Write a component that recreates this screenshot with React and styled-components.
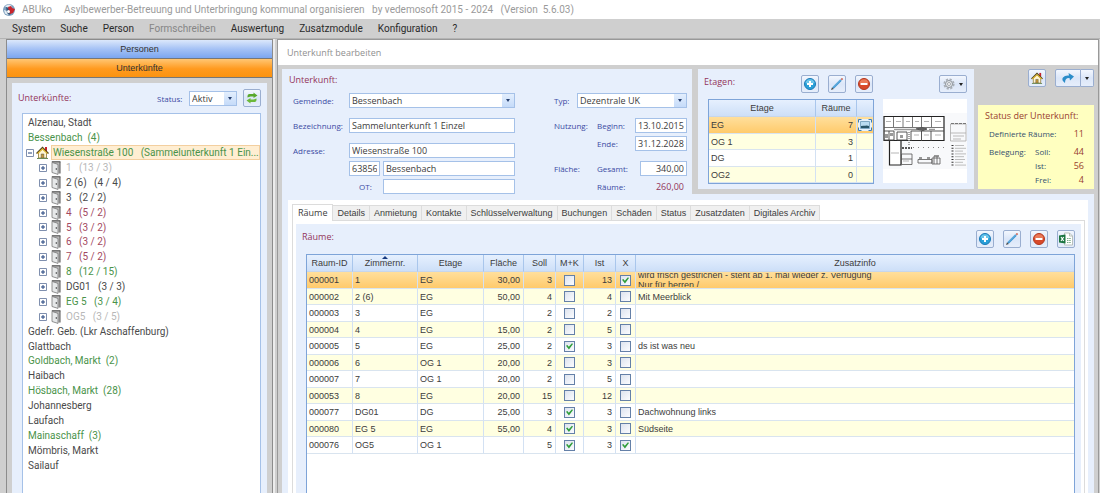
import React, {useState} from 'react';
import styled, {createGlobalStyle, css} from 'styled-components';

const ui = '"Open Sans", "Noto Sans", sans-serif';
const wide = 'Roboto, "Open Sans", sans-serif';
const grid = '"Liberation Sans", Arial, sans-serif';

const GlobalStyle = createGlobalStyle`
  * { box-sizing: border-box; }
  body { margin: 0; background: #cfcfcf; }
  button, input, select { font: inherit; color: inherit; margin: 0; padding: 0; }
  ul { list-style: none; margin: 0; padding: 0; }
  h1, h2, h3 { margin: 0; font-weight: normal; }
`;

const Window = styled.div`
  display: flex;
  flex-direction: column;
  height: 100vh;
  overflow: hidden;
  background: #cfcfcf;
  color: #3c3c3c;
  font: 9px/14px ${ui};
`;

const TitleBar = styled.header`
  display: flex;
  align-items: center;
  height: 19px;
  padding-left: 2px;
  background: #fff;
  color: #9a9a9a;
  font-family: ${wide};
  font-size: 10px;
  white-space: pre;
`;

const AppName = styled.span`
  width: 42px;
  margin-left: 6px;
`;

const Title = styled.h1`
  font-size: 10px;
`;

const MenuBar = styled.nav`
  display: flex;
  gap: 15px;
  height: 20px;
  padding-left: 12px;
  border-bottom: 1px solid #b4b4b4;
  font-family: ${wide};
  font-size: 10px;
`;

const MenuItem = styled.button`
  border: 0;
  background: none;
  color: #2a2a2a;

  &:disabled {
    color: #868686;
  }
`;

const Workspace = styled.div`
  display: flex;
  flex: 1;
  min-height: 0;
`;

const Sidebar = styled.aside`
  display: flex;
  flex-direction: column;
  width: 267px;
  margin-left: 6px;
  border: 1px solid #8c8c8c;
  border-bottom: 0;
`;

const Splitter = styled.div`
  width: 4px;
  border-left: 2px solid #ececec;
`;

const NavButton = styled.button`
  height: 19px;
  border: 0;
  border-bottom: 1px solid #777;
  background: ${p => (p.$active ? 'linear-gradient(#ffc673, #ff9a1e 55%, #fb9310)' : 'linear-gradient(#dce8fb, #a5c2f5 50%, #7ba6f0)')};
  color: #333;
  font-family: ${grid};
`;

const SidePanel = styled.section`
  display: flex;
  flex-direction: column;
  flex: 1;
  min-height: 0;
  margin: 5px 5px 0;
  padding: 0 6px;
  background: #e7effc;
`;

const SideHead = styled.div`
  display: flex;
  align-items: center;
  height: 30px;
`;

const StatusFilter = styled.div`
  display: flex;
  margin: 0 6px 0 auto;
`;

const Heading = styled.h2`
  color: #93355a;
  font-size: 9px;
  line-height: 14px;
`;

const Label = styled.label`
  color: #3b4aa3;
  font-size: 8px;
  line-height: 15px;
`;

const SelectBox = styled.span`
  display: flex;
  width: ${p => (p.$width ? `${p.$width}px` : '100%')};
  height: 15px;
  border: 1px solid #a5c1e8;
  background: #fff;
`;

const NativeSelect = styled.select`
  flex: 1;
  min-width: 0;
  padding-left: 2px;
  border: 0;
  outline: 0;
  background: none;
  appearance: none;
  line-height: 13px;
`;

const Arrow = styled.span`
  display: grid;
  place-items: center;
  width: 12px;
  background: linear-gradient(#e3eefd, #c5dbf9);

  &::after {
    content: '';
    border: 2px solid transparent;
    border-top: 3px solid #27406f;
    border-bottom: 0;
  }
`;

const TextInput = styled.input`
  width: ${p => (p.$width ? `${p.$width}px` : '100%')};
  height: 15px;
  min-width: 0;
  padding: 0 2px;
  border: 1px solid #a5c1e8;
  outline: 0;
  background: #fff;
  text-align: ${p => (p.$right ? 'right' : 'left')};
`;

const ToolButton = styled.button`
  display: flex;
  align-items: center;
  justify-content: center;
  gap: 4px;
  width: ${p => p.$width || 18}px;
  height: 18px;
  border: 1px solid #9aaed0;
  border-radius: 2px;
  background: linear-gradient(#f3f7fe, #dbe6f8 50%, #e6eefb);
`;

const Caret = styled.span`
  border: 2px solid transparent;
  border-top: 3px solid #222;
  border-bottom: 0;
`;

const Tree = styled.ul`
  flex: 1;
  min-height: 0;
  margin-left: 4px;
  padding-top: 1px;
  overflow: hidden;
  border: 1px solid #a5c1e8;
  border-bottom: 0;
  background: #fff;
  font-family: ${wide};
  font-size: 10px;
`;

const treeColors = {
  normal: '#4a4a4a',
  green: '#4a934a',
  red: '#a3495f',
  muted: '#b8b8b8',
};

const TreeItem = styled.li`
  display: flex;
  align-items: center;
  gap: ${p => (p.$level === 1 ? 2 : 4)}px;
  height: 15px;
  padding-left: ${p => [5, 3, 16][p.$level]}px;
  color: ${p => treeColors[p.$tone]};
  line-height: 15px;
  white-space: pre;

  &:nth-child(8n) {
    height: 14px;
  }
`;

const TreeText = styled.span`
  ${p => p.$selected && css`
    flex: 1;
    height: 15px;
    padding-left: 1px;
    border: 1px solid #f3cf9f;
    background: #ffeed2;
    line-height: 13px;
  `}
`;

const Expander = styled.button`
  display: grid;
  width: 8px;
  height: 8px;
  border: 0;
  background: none;
`;

const Main = styled.main`
  display: flex;
  flex-direction: column;
  flex: 1;
  min-width: 0;
  margin-right: 1px;
  border: 1px solid #999;
  border-bottom: 0;
`;

const MainHead = styled.h2`
  height: 25px;
  padding-left: 9px;
  background: #fff;
  color: #8f8f8f;
  font-size: 9px;
  line-height: 25px;
`;

const Content = styled.div`
  display: flex;
  flex-direction: column;
  flex: 1;
  min-height: 0;
  padding: 4px 4px 0;
`;

const TopRow = styled.div`
  display: flex;
  height: 125px;
`;

const FormPanel = styled.section`
  flex: 1;
  min-width: 0;
  margin-right: 6px;
  padding: 4px 5px 0 7px;
  background: #e7effc;
`;

const FormColumns = styled.div`
  display: flex;
  gap: 39px;
  padding: 6px 0 0 4px;
`;

const FormColumn = styled.div`
  flex: ${p => (p.$width ? `0 0 ${p.$width}px` : 1)};
  min-width: 0;
`;

const FormRow = styled.div`
  display: flex;
  align-items: center;
  height: 15px;
  margin-bottom: ${p => (p.$tight ? 3 : 10)}px;
`;

const FormLabel = styled(Label)`
  flex: 0 0 ${p => p.$width}px;
  padding-left: ${p => p.$indent || 0}px;
`;

const PostalCode = styled.span`
  flex: 0 0 34px;
  display: flex;
`;

const Filler = styled.span`
  flex: 1;
`;

const Output = styled.output`
  padding-right: 3px;
  color: #93355a;
`;

const FloorPanel = styled.section`
  width: 276px;
  margin-bottom: 5px;
  padding: 6px 7px 0 6px;
  background: #e7effc;
`;

const Toolbar = styled.div`
  display: flex;
  gap: 9px;
  height: 18px;
`;

const PushRight = styled.span`
  margin-left: auto;
`;

const FloorBody = styled.div`
  display: flex;
  gap: 9px;
  padding: 6px 0 0 4px;
`;

const PlanImage = styled.svg`
  width: 84px;
  height: 84px;
  background: #fff;
`;

const StatusColumn = styled.div`
  display: flex;
  flex-direction: column;
  justify-content: space-between;
  width: 116px;
  margin: 0 0 5px 4px;
`;

const StatusTools = styled.div`
  display: flex;
  justify-content: flex-end;
  gap: 9px;
`;

const SplitButton = styled.div`
  display: flex;

  button:first-child {
    border-radius: 2px 0 0 2px;
  }

  button:last-child {
    border-left: 0;
    border-radius: 0 2px 2px 0;
  }
`;

const StatusBox = styled.section`
  height: 84px;
  padding: 4px 10px 0 7px;
  background: #ffffc0;
`;

const StatusTitle = styled.h3`
  color: #99402f;
  font-size: 9px;
  line-height: 14px;
`;

const StatusList = styled.dl`
  display: grid;
  grid-template-columns: 46px 1fr auto;
  margin: 4px 0 0 4px;
  color: #35506e;
  font-size: 8px;
  line-height: 14px;

  dd {
    margin: 0;
    color: #99402f;
    font-size: 9px;
    text-align: right;
  }
`;

const StatusTerm = styled.dt`
  grid-column: ${p => p.$column || 'auto'};
  margin-bottom: ${p => (p.$spaced ? 4 : 0)}px;
`;

const DetailPanel = styled.section`
  display: flex;
  flex: 1;
  min-height: 0;
  padding: 6px 6px 0;
  background: #e7effc;
`;

const TabBox = styled.div`
  display: flex;
  flex-direction: column;
  flex: 1;
  min-width: 0;
  padding: 4px 3px 0 4px;
  background: #fff;
`;

const TabList = styled.div`
  display: flex;
  align-items: flex-end;
  height: 17px;
  border-bottom: 1px solid #dcdcdc;
  font-family: ${grid};
`;

const Tab = styled.button`
  height: ${p => (p.$active ? 17 : 15)}px;
  padding: 0 ${p => (p.$active ? 5 : 4)}px;
  margin-bottom: ${p => (p.$active ? -1 : 0)}px;
  border: 1px solid #dcdcdc;
  border-bottom: 0;
  border-left-width: ${p => (p.$active ? 1 : 0)}px;
  background: ${p => (p.$active ? '#fff' : '#f0f0f0')};
  font-family: ${p => (p.$active ? ui : 'inherit')};
  white-space: nowrap;
`;

const TabPage = styled.div`
  display: flex;
  flex-direction: column;
  flex: 1;
  min-height: 0;
  padding: 3px 3px 0;
  border: 1px solid #dcdcdc;
  border-width: 0 1px;
`;

const RoomPanel = styled.div`
  display: flex;
  flex-direction: column;
  flex: 1;
  min-height: 0;
  padding: 6px 6px 0;
  background: #e7effc;
`;

const TableFrame = styled.div`
  flex: 1;
  min-height: 0;
  margin: 6px 0 0 4px;
  overflow: hidden;
  border: 1px solid #7ea4d8;
  border-bottom: 0;
  background: #fff;
`;

const Table = styled.table`
  width: 100%;
  table-layout: fixed;
  border-collapse: separate;
  border-spacing: 0;
  font: 9px/14px ${grid};
`;

const FloorTable = styled(Table)`
  width: 166px;
  border: 1px solid #7ea4d8;
`;

const Th = styled.th`
  height: 17px;
  padding: 0;
  border-right: 1px solid #a9c6ec;
  border-bottom: 1px solid #c7d6ea;
  background: linear-gradient(#e6f0fe, #cddff8);
  font-weight: normal;
  text-align: center;

  &:last-child {
    border-right: 0;
  }
`;

const SortMark = styled.span`
  position: absolute;
  top: 0;
  left: 50%;
  margin-left: -3px;
  border: 3px solid transparent;
  border-top: 0;
  border-bottom: 3px solid #173a80;
`;

const HeadCell = styled.div`
  position: relative;
`;

const Row = styled.tr`
  height: 17px;
  background: #fff;

  &:nth-child(even) {
    height: 16px;
    background: #ffffe1;
  }

  ${p => p.$selected && css`
    background: linear-gradient(#ffdf9c, #ffc968);
  `}
`;

const Td = styled.td`
  padding: 0 3px 0 2px;
  border-right: 1px solid #d3e1f3;
  border-bottom: 1px solid #d9e4ef;
  line-height: 14px;
  text-align: ${p => p.$align || 'left'};
  white-space: nowrap;

  &:last-child {
    border-right: 0;
  }
`;

const CheckCell = styled(Td)`
  padding: 0;
  line-height: 0;
`;

const Check = styled.input`
  width: 11px;
  height: 11px;
  border: 1px solid #6480a8;
  background: linear-gradient(135deg, #dde3ee, #fbfcff);
  appearance: none;
  vertical-align: top;

  &:checked::after {
    content: '';
    display: block;
    width: 7px;
    height: 7px;
    margin: 1px;
    background: #2f9e3a;
    clip-path: polygon(0 45%, 20% 35%, 40% 60%, 85% 10%, 100% 20%, 42% 100%);
  }
`;

const Note = styled.div`
  display: flex;
  align-items: center;
  height: 14px;
  overflow: hidden;
  line-height: 10px;
  white-space: pre;
`;

const AppIcon = () => (
  <svg width="14" height="14" viewBox="0 0 14 14" aria-hidden="true">
    <circle cx="7" cy="7" r="6" fill="#7e9fbd" />
    <path d="M3 3 7 1.500 10 3 8 5 5 5zM2 7l3 1 1 4-3-1.500z" fill="#e4eef5" />
    <path d="M4 4l4 1 2 3-2 4-3-2z" fill="#34587c" />
    <path d="M6 4l3-1 1 2 3 1-2 4-3 1-1-3z" fill="#c9242b" />
    <circle cx="6.500" cy="8.500" r="1.500" fill="#fff" />
  </svg>
);

const House = ({size = 13}) => (
  <svg width={size} height={size} viewBox="0 0 13 13" aria-hidden="true">
    <path d="M9 1h2v4H9z" fill="#c8202a" />
    <path d="M2.500 6.500 6.500 3l4 3.500V12h-8z" fill="#fff6d2" stroke="#8a7434" strokeWidth=".8" />
    <path d="M.5 7.500 6.500 1.500l6 6" fill="none" stroke="#4d421c" strokeWidth="1.300" />
    <path d="M1.500 7.600 6.500 2.900l5 4.700" fill="none" stroke="#e1b62d" strokeWidth="1.200" />
    <path d="M5.200 8h2.600v4H5.200z" fill="#c79a35" stroke="#4a4a4a" strokeWidth=".5" />
    <path d="M1 12.500h11" stroke="#6b8a58" />
  </svg>
);

const Door = () => (
  <svg width="11" height="14" viewBox="0 0 11 14" aria-hidden="true">
    <path d="M1 .8h8v11.700H6" fill="#b9b9b9" />
    <path d="M.8.8h8.700" stroke="#444" />
    <path d="M9 1v11.500" stroke="#555" />
    <path d="M1 1.400l6 2v10L1 11.500z" fill="#e6e8e9" stroke="#777" strokeWidth=".8" />
    <circle cx="5.300" cy="8" r=".7" fill="#222" />
  </svg>
);

const ToggleIcon = ({open}) => (
  <svg width="8" height="8" viewBox="0 0 8 8" aria-hidden="true">
    <path d="M.5.5h7v7h-7z" fill="#fff" stroke="#7f8fae" />
    <path d={open ? 'M2 4h4' : 'M2 4h4M4 2v4'} stroke="#24447e" />
  </svg>
);

const Refresh = () => (
  <svg width="14" height="14" viewBox="0 0 14 14" aria-hidden="true">
    <path d="M2.500 6.500V5q0-2 2-2h4V1.500L12.500 4.500 8.500 7V5.500H5.500z" fill="#58a82c" />
    <path d="M11.500 7.500V9q0 2-2 2h-4v1.500L1.500 9.500 5.500 7v1.500h3z" fill="#6cb93a" />
  </svg>
);

const Plus = () => (
  <svg width="14" height="14" viewBox="0 0 14 14" aria-hidden="true">
    <circle cx="7" cy="7" r="5.500" fill="#29a0d8" stroke="#1b79b6" />
    <path d="M2.500 6a4.600 4.600 0 0 1 9 0q-4.500 2-9 0z" fill="#6cc5ea" />
    <path d="M7 4v6M4 7h6" stroke="#fff" strokeWidth="2" />
  </svg>
);

const Minus = () => (
  <svg width="14" height="14" viewBox="0 0 14 14" aria-hidden="true">
    <circle cx="7" cy="7" r="5.500" fill="#d8492a" stroke="#b3381f" />
    <path d="M2.500 6a4.600 4.600 0 0 1 9 0q-4.500 1.500-9 0z" fill="#ea7a58" />
    <path d="M3.500 7h7" stroke="#fff" strokeWidth="2" />
  </svg>
);

const Pencil = () => (
  <svg width="14" height="14" viewBox="0 0 14 14" aria-hidden="true">
    <path d="M3 11 11 3" stroke="#3b93cf" strokeWidth="2.200" />
    <path d="M3.500 10 10.500 3" stroke="#8cc9ec" strokeWidth=".7" />
    <path d="M1 13l1-2.800L3.800 12z" fill="#4a4a4a" />
    <path d="M10.700 2 12 .9 13.100 2 12 3.300z" fill="#c9503c" />
  </svg>
);

const Gear = () => (
  <svg width="12" height="12" viewBox="0 0 12 12" aria-hidden="true">
    <circle cx="6" cy="6" r="4.700" fill="none" stroke="#a9afb6" strokeWidth="1.800" strokeDasharray="2.200 1.490" />
    <circle cx="6" cy="6" r="3.500" fill="#e6e9ed" stroke="#8d949c" strokeWidth="1" />
    <circle cx="6" cy="6" r="1.500" fill="#fff" stroke="#8f969d" strokeWidth=".8" />
  </svg>
);

const Excel = () => (
  <svg width="14" height="14" viewBox="0 0 14 14" aria-hidden="true">
    <path d="M5.500 1h5l3 3v9h-8z" fill="#fff" stroke="#a9b2ac" strokeWidth=".8" />
    <path d="M10.500 1v3h3" fill="none" stroke="#a9b2ac" strokeWidth=".8" />
    <path d="M8 6.500h4M8 8.500h4M8 10.500h4" stroke="#74ab82" strokeDasharray="1.500 .7" />
    <path d="M0 3.500 6.500 2.500v9L0 10.500z" fill="#1b7540" />
    <path d="M2 5 4.700 9M4.700 5 2 9" stroke="#fff" strokeWidth="1.200" />
  </svg>
);

const Forward = () => (
  <svg width="14" height="12" viewBox="0 0 14 12" aria-hidden="true">
    <path d="M4 11Q0 8 2 5.500 4 3 8 3.500L7.500 1 13 4.500 9 8.500 8.500 6Q4 5.500 4 11z" fill="#2b8dc9" />
  </svg>
);

const Picture = () => (
  <svg width="14" height="12" viewBox="0 0 14 12" aria-hidden="true">
    <path d="M0 0h14v12H0z" fill="#e6f1fb" />
    <path d="M.5 3.500v-3h3M10.500.5h3v3M13.500 8.500v3h-3M3.500 11.500h-3v-3" fill="none" stroke="#3a7dbb" />
    <path d="M2.500 2.500h9v7h-9z" fill="#b9dcf1" stroke="#7fa9c4" />
    <path d="M3 9V7q2-.5 4-.2 2-.6 4 .2v2z" fill="#28566a" />
  </svg>
);

const FloorPlan = () => (
  <PlanImage viewBox="0 0 84 84" role="img" aria-label="Grundriss EG">
    <path d="M0 14h84v56H0z" fill="#f8f9fb" />
    <path d="M1 17.500h60v24H1zM6.500 42v24h11.500V42" fill="#fff" stroke="#222" strokeWidth="1.200" />
    <path d="M10.500 18v10M20 18v10M29.500 18v10M38.500 18v10M48.500 18v10M1 28.500h60" stroke="#555" strokeWidth=".8" />
    <path d="M1 32h10M1 41h10M11 32v9M6 32v9M14 33h10v8H14zM38.500 32v10M28 32v10M48 32v10M28 32h33" fill="none" stroke="#444" strokeWidth=".9" />
    <path d="M11 30.500h22M46 30.500h6" stroke="#999" strokeWidth="1.500" />
    <path d="M33 30l6-1.500 5 1.500-4 1.500z" stroke="#555" fill="#666" />
    <path d="M26 33v13" stroke="#888" strokeWidth="1.500" strokeDasharray="1 1" />
    <path d="M2 35h3v4H2zM7 34h3v3H7zM17 36h3v3h-3z" fill="#999" />
    <path d="M3 22.500h5M13 22.500h5M23 22.500h4M32 22.500h4M41 22.500h5M52 22.500h6M31 36h5M41 36h5M52 36h6M8 54h8M20 62h6" stroke="#b5b5b5" strokeWidth="1.200" />
    <path d="M19 49h10" stroke="#555" strokeWidth="2" strokeDasharray="2 1" />
    <path d="M30 48.500h32" stroke="#888" strokeDasharray="1 4" />
    <path d="M18.500 55v10.500H29V55zM18.500 60H29M35 60.500h14V64H35zM49 59h8v6h-8zM51 57v8M54 57v8" fill="none" stroke="#555" strokeWidth=".8" />
    <path d="M36 59h3M44 59h3M51 57h5" stroke="#777" strokeWidth="1.300" />
    <path d="M67.500 25v17H83V25zM67.500 34H83M70 37h11M70 40h8" fill="none" stroke="#aaa" strokeWidth=".8" />
    <path d="M68 24.500h15" stroke="#777" strokeDasharray="3 1" />
    <path d="M69.500 46v22" stroke="#333" strokeWidth="2" strokeDasharray="1 1.800" />
    <path d="M72 46.500h9M72 49.300h11M72 52.100h8M72 54.900h11M72 57.700h9M72 60.500h10M72 63.300h8M72 66.100h11" stroke="#b5b5b5" strokeWidth=".9" />
  </PlanImage>
);

const menu = ['System', 'Suche', 'Person', 'Formschreiben', 'Auswertung', 'Zusatzmodule', 'Konfiguration', '?'];

const tree = [
  ['Alzenau, Stadt', 'normal', 0],
  ['Bessenbach  (4)', 'green', 0],
  ['Wiesenstraße 100   (Sammelunterkunft 1 Ein...', 'green', 1],
  ['1   (13 / 3)', 'muted', 2],
  ['2 (6)   (4 / 4)', 'normal', 2],
  ['3   (2 / 2)', 'normal', 2],
  ['4   (5 / 2)', 'red', 2],
  ['5   (3 / 2)', 'red', 2],
  ['6   (3 / 2)', 'red', 2],
  ['7   (5 / 2)', 'red', 2],
  ['8   (12 / 15)', 'green', 2],
  ['DG01   (3 / 3)', 'normal', 2],
  ['EG 5   (3 / 4)', 'green', 2],
  ['OG5   (3 / 5)', 'muted', 2],
  ['Gdefr. Geb. (Lkr Aschaffenburg)', 'normal', 0],
  ['Glattbach', 'normal', 0],
  ['Goldbach, Markt  (2)', 'green', 0],
  ['Haibach', 'normal', 0],
  ['Hösbach, Markt  (28)', 'green', 0],
  ['Johannesberg', 'normal', 0],
  ['Laufach', 'normal', 0],
  ['Mainaschaff  (3)', 'green', 0],
  ['Mömbris, Markt', 'normal', 0],
  ['Sailauf', 'normal', 0],
];

const floors = [['EG', 7], ['OG 1', 3], ['DG', 1], ['OG2', 0]];

const tabs = [
  'Räume', 'Details', 'Anmietung', 'Kontakte', 'Schlüsselverwaltung',
  'Buchungen', 'Schäden', 'Status', 'Zusatzdaten', 'Digitales Archiv',
];

const columns = [
  ['Raum-ID', 46], ['Zimmernr.', 65], ['Etage', 66], ['Fläche', 40], ['Soll', 32],
  ['M+K', 28], ['Ist', 32], ['X', 20], ['Zusatzinfo'],
];

// id, number, floor, area, capacity, M+K, occupied, X, note
const rooms = [
  ['000001', '1', 'EG', '30,00', 3, false, 13, true, 'wird frisch gestrichen - steht ab 1. mai wieder z. Verfügung\nNur für herren /'],
  ['000002', '2 (6)', 'EG', '50,00', 4, false, 4, false, 'Mit Meerblick'],
  ['000003', '3', 'EG', '', 2, false, 2, false, ''],
  ['000004', '4', 'EG', '15,00', 2, false, 5, false, ''],
  ['000005', '5', 'EG', '25,00', 2, true, 3, false, 'ds ist was neu'],
  ['000006', '6', 'OG 1', '20,00', 2, false, 3, false, ''],
  ['000007', '7', 'OG 1', '20,00', 2, false, 5, false, ''],
  ['000053', '8', 'EG', '20,00', 15, false, 12, false, ''],
  ['000077', 'DG01', 'DG', '25,00', 3, true, 3, false, 'Dachwohnung links'],
  ['000080', 'EG 5', 'EG', '55,00', 4, true, 3, false, 'Südseite'],
  ['000076', 'OG5', 'OG 1', '', 5, true, 3, true, ''],
];

function Select({id, value, width}) {
  return (
    <SelectBox $width={width}>
      <NativeSelect id={id} defaultValue={value}>
        <option>{value}</option>
      </NativeSelect>
      <Arrow />
    </SelectBox>
  );
}

function EditButtons() {
  return (
    <>
      <ToolButton aria-label="Neu"><Plus /></ToolButton>
      <ToolButton aria-label="Bearbeiten"><Pencil /></ToolButton>
      <ToolButton aria-label="Löschen"><Minus /></ToolButton>
    </>
  );
}

function SideTree() {
  return (
    <Tree>
      {tree.map(([text, tone, level]) => (
        <TreeItem key={text} $tone={tone} $level={level}>
          {level > 0 && (
            <Expander aria-label={level === 1 ? 'Zuklappen' : 'Aufklappen'}>
              <ToggleIcon open={level === 1} />
            </Expander>
          )}
          {level === 1 && <House />}
          {level === 2 && <Door />}
          <TreeText $selected={level === 1}>{text}</TreeText>
        </TreeItem>
      ))}
    </Tree>
  );
}

function UnitForm() {
  return (
    <FormPanel>
      <Heading>Unterkunft:</Heading>
      <FormColumns>
        <FormColumn>
          <FormRow>
            <FormLabel $width={56} htmlFor="gemeinde">Gemeinde:</FormLabel>
            <Select id="gemeinde" value="Bessenbach" />
          </FormRow>
          <FormRow>
            <FormLabel $width={56} htmlFor="bezeichnung">Bezeichnung:</FormLabel>
            <TextInput id="bezeichnung" defaultValue="Sammelunterkunft 1 Einzel" />
          </FormRow>
          <FormRow $tight>
            <FormLabel $width={56} htmlFor="strasse">Adresse:</FormLabel>
            <TextInput id="strasse" defaultValue="Wiesenstraße 100" />
          </FormRow>
          <FormRow $tight>
            <FormLabel as="span" $width={56} />
            <PostalCode>
              <TextInput $width={31} aria-label="PLZ" defaultValue="63856" />
            </PostalCode>
            <TextInput aria-label="Ort" defaultValue="Bessenbach" />
          </FormRow>
          <FormRow>
            <FormLabel $width={90} $indent={66} htmlFor="ortsteil">OT:</FormLabel>
            <TextInput id="ortsteil" />
          </FormRow>
        </FormColumn>
        <FormColumn $width={133}>
          <FormRow>
            <FormLabel $width={23} htmlFor="typ">Typ:</FormLabel>
            <Select id="typ" value="Dezentrale UK" />
          </FormRow>
          <FormRow $tight>
            <FormLabel as="span" $width={43}>Nutzung:</FormLabel>
            <FormLabel $width={38} htmlFor="beginn">Beginn:</FormLabel>
            <TextInput id="beginn" defaultValue="13.10.2015" />
          </FormRow>
          <FormRow>
            <FormLabel $width={81} $indent={43} htmlFor="ende">Ende:</FormLabel>
            <TextInput id="ende" defaultValue="31.12.2028" />
          </FormRow>
          <FormRow $tight>
            <FormLabel as="span" $width={43}>Fläche:</FormLabel>
            <FormLabel $width={43} htmlFor="gesamt">Gesamt:</FormLabel>
            <TextInput id="gesamt" $right defaultValue="340,00" />
          </FormRow>
          <FormRow>
            <FormLabel as="span" $width={81} $indent={43}>Räume:</FormLabel>
            <Filler />
            <Output>260,00</Output>
          </FormRow>
        </FormColumn>
      </FormColumns>
    </FormPanel>
  );
}

function Floors() {
  return (
    <FloorPanel>
      <Toolbar>
        <Heading>Etagen:</Heading>
        <PushRight />
        <EditButtons />
        <PushRight />
        <ToolButton $width={28} aria-label="Einstellungen"><Gear /><Caret /></ToolButton>
      </Toolbar>
      <FloorBody>
        <FloorTable>
          <colgroup><col /><col width="41" /><col width="16" /></colgroup>
          <thead>
            <tr><Th>Etage</Th><Th>Räume</Th><Th /></tr>
          </thead>
          <tbody>
            {floors.map(([name, count], i) => (
              <Row key={name} $selected={i === 0}>
                <Td>{name}</Td>
                <Td $align="right">{count}</Td>
                <CheckCell $align="center">{i === 0 && <Picture />}</CheckCell>
              </Row>
            ))}
          </tbody>
        </FloorTable>
        <FloorPlan />
      </FloorBody>
    </FloorPanel>
  );
}

function Status() {
  return (
    <StatusColumn>
      <StatusTools>
        <ToolButton aria-label="Start"><House size={12} /></ToolButton>
        <SplitButton>
          <ToolButton $width={26} aria-label="Weiter"><Forward /></ToolButton>
          <ToolButton $width={13} aria-label="Weitere Aktionen"><Caret /></ToolButton>
        </SplitButton>
      </StatusTools>
      <StatusBox>
        <StatusTitle>Status der Unterkunft:</StatusTitle>
        <StatusList>
          <StatusTerm $column="1 / 3" $spaced>Definierte Räume:</StatusTerm>
          <dd>11</dd>
          <StatusTerm>Belegung:</StatusTerm>
          <StatusTerm>Soll:</StatusTerm>
          <dd>44</dd>
          <StatusTerm $column="2">Ist:</StatusTerm>
          <dd>56</dd>
          <StatusTerm $column="2">Frei:</StatusTerm>
          <dd>4</dd>
        </StatusList>
      </StatusBox>
    </StatusColumn>
  );
}

function RoomTable() {
  return (
    <TableFrame>
      <Table>
        <colgroup>
          {columns.map(([name, width]) => <col key={name} width={width} />)}
        </colgroup>
        <thead>
          <tr>
            {columns.map(([name]) => (
              <Th key={name}>
                <HeadCell>
                  {name === 'Zimmernr.' && <SortMark />}
                  {name}
                </HeadCell>
              </Th>
            ))}
          </tr>
        </thead>
        <tbody>
          {rooms.map(([id, nr, floor, area, soll, mk, ist, x, note], i) => (
            <Row key={id} $selected={i === 0}>
              <Td>{id}</Td>
              <Td>{nr}</Td>
              <Td>{floor}</Td>
              <Td $align="right">{area}</Td>
              <Td $align="right">{soll}</Td>
              <CheckCell $align="center">
                <Check type="checkbox" aria-label={`M+K ${id}`} defaultChecked={mk} />
              </CheckCell>
              <Td $align="right">{ist}</Td>
              <CheckCell $align="center">
                <Check type="checkbox" aria-label={`X ${id}`} defaultChecked={x} />
              </CheckCell>
              <Td><Note>{note}</Note></Td>
            </Row>
          ))}
        </tbody>
      </Table>
    </TableFrame>
  );
}

function App() {
  const [tab, setTab] = useState('Räume');

  return (
    <Window>
      <GlobalStyle />
      <TitleBar>
        <AppIcon />
        <AppName>ABUko</AppName>
        <Title>Asylbewerber-Betreuung und Unterbringung kommunal organisieren   by vedemosoft 2015 - 2024   (Version  5.6.03)</Title>
      </TitleBar>
      <MenuBar>
        {menu.map(name => (
          <MenuItem key={name} disabled={name === 'Formschreiben'}>{name}</MenuItem>
        ))}
      </MenuBar>
      <Workspace>
        <Sidebar>
          <NavButton>Personen</NavButton>
          <NavButton $active>Unterkünfte</NavButton>
          <SidePanel>
            <SideHead>
              <Heading>Unterkünfte:</Heading>
              <StatusFilter>
                <FormLabel $width={32} htmlFor="status">Status:</FormLabel>
                <Select id="status" value="Aktiv" width={48} />
              </StatusFilter>
              <ToolButton aria-label="Aktualisieren"><Refresh /></ToolButton>
            </SideHead>
            <SideTree />
          </SidePanel>
        </Sidebar>
        <Splitter />
        <Main>
          <MainHead>Unterkunft bearbeiten</MainHead>
          <Content>
            <TopRow>
              <UnitForm />
              <Floors />
              <Status />
            </TopRow>
            <DetailPanel>
              <TabBox>
                <TabList role="tablist">
                  {tabs.map(name => (
                    <Tab key={name} role="tab" aria-selected={tab === name} $active={tab === name} onClick={() => setTab(name)}>
                      {name}
                    </Tab>
                  ))}
                </TabList>
                <TabPage role="tabpanel">
                  <RoomPanel>
                    <Toolbar>
                      <Heading>Räume:</Heading>
                      <PushRight />
                      <EditButtons />
                      <ToolButton aria-label="Excel-Export"><Excel /></ToolButton>
                    </Toolbar>
                    <RoomTable />
                  </RoomPanel>
                </TabPage>
              </TabBox>
            </DetailPanel>
          </Content>
        </Main>
      </Workspace>
    </Window>
  );
}

export default App;
